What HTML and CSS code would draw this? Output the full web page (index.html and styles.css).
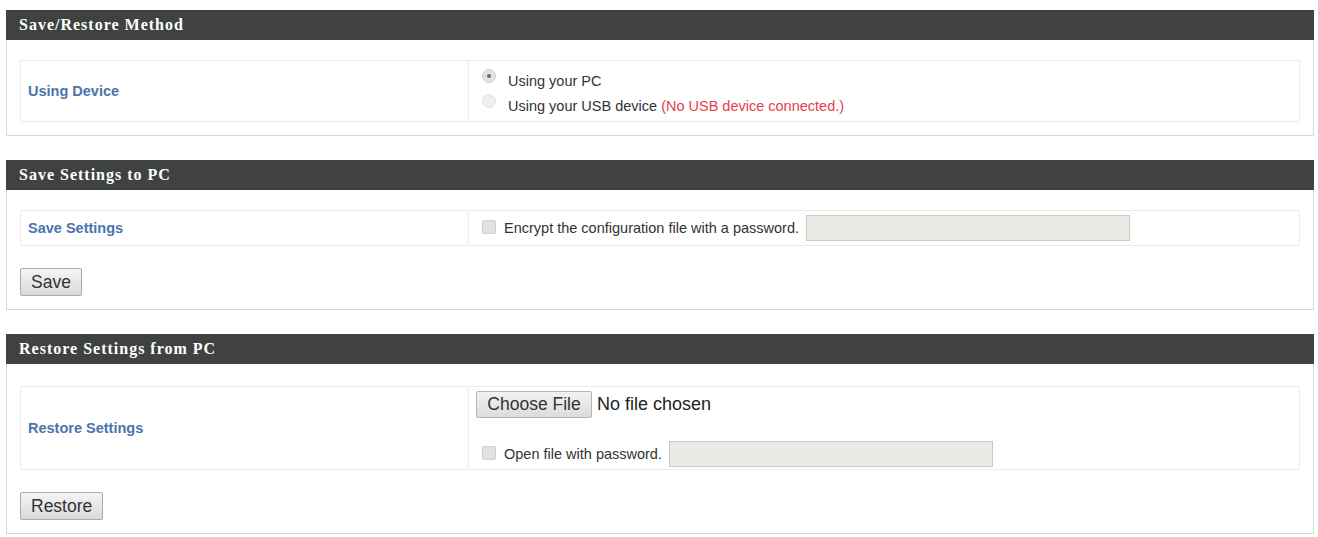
FILE: index.html
```html
<!DOCTYPE html>
<html lang="en">
<head>
<meta charset="UTF-8">
<title>Backup / Restore</title>
<link rel="stylesheet" href="styles.css">
</head>
<body>

<!-- Save/Restore method -->
<div class="panel">
    <div class="panel-title">Save/Restore Method</div>
    <div class="panel-body">
        <table class="settings">
            <tr class="row-method">
                <td class="label">Using Device</td>
                <td class="value">
                    <label class="opt"><input type="radio" name="dev" checked>Using your PC</label>
                    <label class="opt"><input type="radio" name="dev" disabled>Using your USB device&nbsp;<span class="warn">(No USB device connected.)</span></label>
                </td>
            </tr>
        </table>
    </div>
</div>

<!-- Save settings -->
<div class="panel">
    <div class="panel-title">Save Settings to PC</div>
    <div class="panel-body">
        <table class="settings">
            <tr class="row-save">
                <td class="label">Save Settings</td>
                <td class="value">
                    <label class="check"><input type="checkbox">Encrypt the configuration file with a password.</label>
                    <input type="text" class="pass" disabled>
                </td>
            </tr>
        </table>
        <button class="btn">Save</button>
    </div>
</div>

<!-- Restore settings -->
<div class="panel">
    <div class="panel-title">Restore Settings from PC</div>
    <div class="panel-body restore">
        <table class="settings">
            <tr class="row-restore">
                <td class="label">Restore Settings</td>
                <td class="value">
                    <div class="file-line">
                        <button class="file-btn">Choose File</button>
                        <span class="file-name">No file chosen</span>
                    </div>
                    <div class="pass-line">
                        <label class="check"><input type="checkbox">Open file with password.</label>
                        <input type="text" class="pass" disabled>
                    </div>
                </td>
            </tr>
        </table>
        <button class="btn">Restore</button>
    </div>
</div>

</body>
</html>
```

FILE: styles.css
```css
body {
    margin: 0;
    padding: 10px 4px 0 6px;
    font-family: "Liberation Sans", Arial, sans-serif;
    font-size: 14.5px;
    color: #333;
    background: #fff;
}

.panel {
    border: 1px solid #d9d9d9;
    border-top: none;
    margin-bottom: 24px;
}

.panel-title {
    height: 30px;
    line-height: 30px;
    background: #404241;
    color: #fff;
    font-family: "Liberation Serif", "Times New Roman", serif;
    font-weight: bold;
    font-size: 16px;
    letter-spacing: 1px;
    padding-left: 13px;
    margin: 0 -1px;
}

.panel-body {
    padding: 20px 13px 13px 13px;
}

.panel-body.restore {
    padding-top: 22px;
}

.settings {
    width: 100%;
    border-collapse: collapse;
    border: 1px solid #ebebeb;
}

.settings td {
    padding: 0;
}

.label {
    width: 440px;
    padding-left: 7px !important;
    color: #4a74ab;
    font-weight: bold;
    font-size: 14.5px;
    border-right: 1px solid #ebebeb;
}

.value {
    padding-left: 13px !important;
}

.row-method td { height: 54px; }
.row-method .label { height: 60px; }
.row-method .value { padding-top: 6px !important; }
.row-save td { height: 34px; }
.row-restore td { height: 82px; }

.opt {
    display: flex;
    align-items: flex-start;
    height: 25px;
    line-height: 25px;
}

.check {
    display: inline-flex;
    align-items: center;
    vertical-align: middle;
}

.warn {
    color: #e8404a;
}

input[type="radio"],
input[type="checkbox"] {
    -webkit-appearance: none;
    appearance: none;
    flex: none;
    width: 14px;
    height: 14px;
    margin: 0 8px 0 0;
    background: #e2e2e2;
    border: 1px solid #d0d0d0;
    position: relative;
}

input[type="radio"] {
    border-radius: 50%;
    margin: 0 12px 0 0;
}

input[type="radio"]:checked::after {
    content: "";
    position: absolute;
    left: 4px;
    top: 4px;
    width: 4px;
    height: 4px;
    border-radius: 50%;
    background: #6a6a6a;
}

input[type="radio"]:disabled {
    background: #efefef;
    border-color: #e2e2e2;
}

input[type="checkbox"] {
    border-radius: 2px;
    margin-top: -3px;
}

.pass {
    width: 322px;
    height: 24px;
    padding: 0;
    margin-left: 3px;
    border: 1px solid #c9c9c9;
    background: #ebebe6;
    vertical-align: middle;
}

.file-line {
    margin: 2px 0 0 -6px;
    height: 27px;
    display: flex;
    align-items: center;
}

.file-btn {
    font-family: "Liberation Sans", Arial, sans-serif;
    font-size: 17.5px;
    color: #333;
    height: 27px;
    width: 116px;
    padding: 0;
    border: 1px solid #b5b5b5;
    border-radius: 2px;
    background: linear-gradient(#f2f2f2, #dcdcdc);
}

.file-name {
    font-size: 18px;
    margin-left: 5px;
    color: #222;
}

.pass-line {
    margin-top: 23px;
}

.btn {
    margin-top: 22px;
    height: 28px;
    padding: 0 10px;
    font-family: "Liberation Sans", Arial, sans-serif;
    font-size: 17.5px;
    color: #333;
    border: 1px solid #a9a9a9;
    border-radius: 2px;
    background: linear-gradient(#f5f5f5, #d9d9d9);
    display: block;
}
```
